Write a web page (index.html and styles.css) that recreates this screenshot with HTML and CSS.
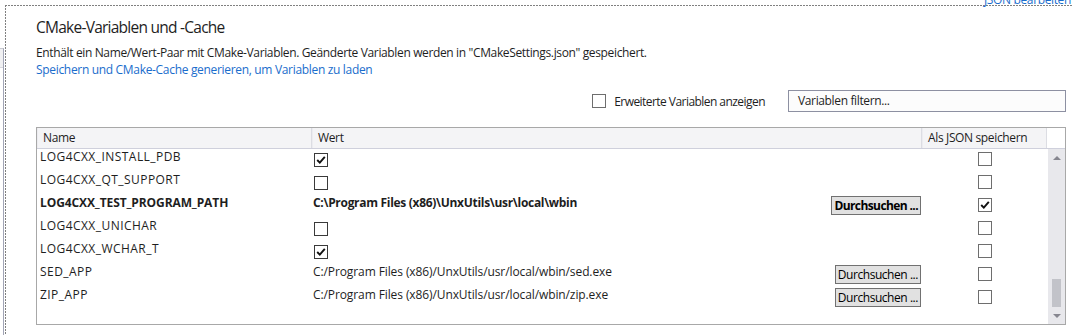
FILE: index.html
```html
<!DOCTYPE html>
<html lang="de">
<head>
<meta charset="utf-8">
<title>CMake-Variablen und -Cache</title>
<link rel="stylesheet" href="styles.css">
</head>
<body>
<div class="page">
  <div class="gutter"><div class="gutter-line"><div class="gutter-tab"></div></div></div>
  <div class="panel">
    <div class="topbar"><a class="edit-json">JSON bearbeiten</a></div>
    <div class="content">
      <h1 class="title">CMake-Variablen und -Cache</h1>
      <p class="desc">Enthält ein Name/Wert-Paar mit CMake-Variablen. Geänderte Variablen werden in "CMakeSettings.json" gespeichert.</p>
      <a class="link">Speichern und CMake-Cache generieren, um Variablen zu laden</a>
      <div class="controls">
        <label class="adv"><span class="cb cb-light"></span><span class="adv-text">Erweiterte Variablen anzeigen</span></label>
        <div class="filter">Variablen filtern...</div>
      </div>
      <div class="table">
        <div class="thead">
          <div class="th">Name</div>
          <div class="th">Wert</div>
          <div class="th">Als JSON speichern</div>
          <div class="th th-blank"></div>
        </div>
        <div class="tbody">
          <div class="rows">
            <div class="row">
              <div class="c-name">LOG4CXX_INSTALL_PDB</div>
              <div class="c-val"><span class="cb cb-dark"><svg viewBox="0 0 12 12"><polyline points="2.2,6 4.8,8.6 9.8,2.8"/></svg></span></div>
              <div class="c-json"><span class="cb cb-light"></span></div>
            </div>
            <div class="row">
              <div class="c-name">LOG4CXX_QT_SUPPORT</div>
              <div class="c-val"><span class="cb cb-dark"></span></div>
              <div class="c-json"><span class="cb cb-light"></span></div>
            </div>
            <div class="row row-bold">
              <div class="c-name">LOG4CXX_TEST_PROGRAM_PATH</div>
              <div class="c-val"><span class="path">C:\Program Files (x86)\UnxUtils\usr\local\wbin</span><button class="browse">Durchsuchen ...</button></div>
              <div class="c-json"><span class="cb cb-light"><svg viewBox="0 0 12 12"><polyline points="2.2,6 4.8,8.6 9.8,2.8"/></svg></span></div>
            </div>
            <div class="row">
              <div class="c-name">LOG4CXX_UNICHAR</div>
              <div class="c-val"><span class="cb cb-dark"></span></div>
              <div class="c-json"><span class="cb cb-light"></span></div>
            </div>
            <div class="row">
              <div class="c-name">LOG4CXX_WCHAR_T</div>
              <div class="c-val"><span class="cb cb-dark"><svg viewBox="0 0 12 12"><polyline points="2.2,6 4.8,8.6 9.8,2.8"/></svg></span></div>
              <div class="c-json"><span class="cb cb-light"></span></div>
            </div>
            <div class="row">
              <div class="c-name">SED_APP</div>
              <div class="c-val"><span class="path">C:/Program Files (x86)/UnxUtils/usr/local/wbin/sed.exe</span><button class="browse">Durchsuchen ...</button></div>
              <div class="c-json"><span class="cb cb-light"></span></div>
            </div>
            <div class="row">
              <div class="c-name">ZIP_APP</div>
              <div class="c-val"><span class="path">C:/Program Files (x86)/UnxUtils/usr/local/wbin/zip.exe</span><button class="browse">Durchsuchen ...</button></div>
              <div class="c-json"><span class="cb cb-light"></span></div>
            </div>
          </div>
          <div class="scrollbar">
            <div class="sb-btn"><span class="arrow-up"></span></div>
            <div class="sb-track"><div class="sb-thumb"></div></div>
            <div class="sb-btn"><span class="arrow-down"></span></div>
          </div>
        </div>
      </div>
    </div>
  </div>
</div>
</body>
</html>
```
FILE: styles.css
```css
* { box-sizing: border-box; }
html, body { margin: 0; padding: 0; background: #fff; }
body {
  font-family: "Open Sans", "Noto Sans", sans-serif;
  font-size: 12px;
  letter-spacing: -0.36px;
  color: #1e1e1e;
  width: 1073px;
  height: 335px;
  overflow: hidden;
}
.page { display: flex; height: 335px; }

.gutter { width: 5px; display: flex; flex-direction: column; }
.gutter-line {
  margin-top: 48px;
  flex: 1;
  width: 4px;
  border-right: 1px solid #a2a5b6;
  border-top: 1px solid #c9cad2;
}
.gutter-tab { height: 19px; background: #f0f0f2; border-bottom: 1px solid #d5d6dd; }

.panel {
  flex: 1;
  margin-top: 5px;
  display: flex;
  flex-direction: column;
  background-image:
    repeating-linear-gradient(90deg, #808080 0 2px, transparent 2px 3px),
    repeating-linear-gradient(180deg, #808080 0 2px, transparent 2px 3px);
  background-size: 100% 1px, 1px 100%;
  background-repeat: no-repeat;
  background-position: left top, left top;
}
.topbar { height: 0; display: flex; justify-content: flex-end; align-items: flex-end; }
.edit-json { color: #1a6dcc; line-height: 16px; margin-bottom: -3px; margin-right: 2px; }

.content { padding: 11px 7px 0 31px; display: flex; flex-direction: column; }
.title { margin: 0; font-size: 15.5px; letter-spacing: -0.75px; font-weight: 400; line-height: 22px; color: #1e1e1e; }
.desc { margin: 6px 0 0; line-height: 17px; }
.link { color: #1a6dcc; line-height: 17px; letter-spacing: -0.32px; }

.controls { margin-top: 12px; display: flex; justify-content: flex-end; align-items: center; height: 22px; }
.adv { display: flex; align-items: center; gap: 8px; margin-right: 23px; }
.adv-text { letter-spacing: -0.55px; }
.filter {
  width: 278px;
  height: 22px;
  border: 1px solid #8d90a2;
  background: #fcfcfc;
  padding: 0 9px;
  line-height: 20px;
}

.cb {
  display: inline-flex;
  align-items: center;
  justify-content: center;
  width: 14px;
  height: 14px;
  background: #fff;
}
.cb-dark { border: 1px solid #3a3a3a; }
.cb-light { border: 1px solid #6e6e6e; }
.cb svg { width: 12px; height: 12px; fill: none; stroke: #111; stroke-width: 1.9; }

.table { margin-top: 15px; border: 1px solid #a8a8a8; }
.thead { display: grid; grid-template-columns: 275px 610px 125px 17px; height: 21px; border-bottom: 1px solid #cfd0dc; }
.th {
  background: #f4f4f6;
  border-right: 1px solid #dcdde3;
  border-left: 1px solid #ececf0;
  line-height: 20px;
  padding-left: 5px;
}
.th-blank { background: #fff; border: 0; }

.tbody { display: flex; height: 175px; }
.rows { flex: 1; display: flex; flex-direction: column; }
.row { display: grid; grid-template-columns: 275px 610px 125px; height: 23px; line-height: 16px; }
.row-bold { font-weight: 700; }
.c-name { padding-left: 3px; letter-spacing: 0.45px; }
.row-bold .c-name { letter-spacing: -0.1px; }
.c-val { display: flex; justify-content: space-between; align-items: flex-start; padding-left: 1px; padding-right: 1px; }
.path { letter-spacing: -0.1px; }
.row-bold .path { letter-spacing: -0.3px; }
.c-val > .cb { margin-top: 4px; margin-left: 1px; }
.c-json { display: flex; justify-content: center; }
.c-json > .cb { margin-top: 3px; }
.browse {
  font: inherit;
  letter-spacing: -0.45px;
  color: #000;
  height: 19px;
  margin-top: 1px;
  padding: 0 2px;
  line-height: 16px;
  background: #e1e1e1;
  border: 1px solid #717171;
  border-radius: 0;
}
.row-bold .browse { letter-spacing: -0.6px; }

.scrollbar { width: 17px; background: #e8e8ec; display: flex; flex-direction: column; }
.sb-btn { height: 17px; display: flex; align-items: center; justify-content: center; }
.arrow-up { width: 0; height: 0; border-left: 4px solid transparent; border-right: 4px solid transparent; border-bottom: 4px solid #86868f; }
.arrow-down { width: 0; height: 0; border-left: 4px solid transparent; border-right: 4px solid transparent; border-top: 4px solid #86868f; }
.sb-track { flex: 1; display: flex; flex-direction: column; justify-content: flex-end; align-items: center; }
.sb-thumb { width: 9px; height: 28px; background: #c2c3c9; }
```
